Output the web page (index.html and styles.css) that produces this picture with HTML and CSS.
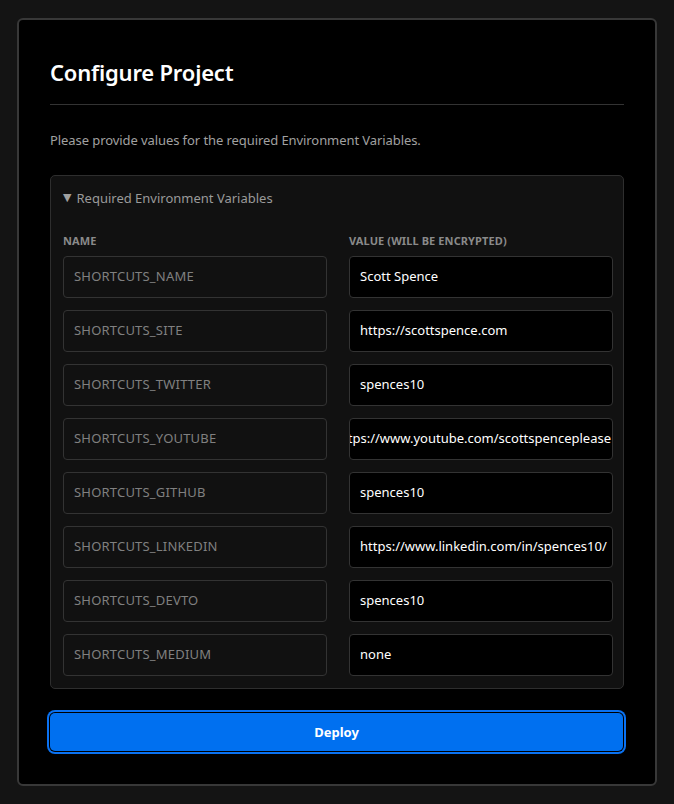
FILE: index.html
```html
<!DOCTYPE html>
<html lang="en">
<head>
<meta charset="utf-8">
<title>Configure Project</title>
<link rel="stylesheet" href="styles.css">
</head>
<body>
<main class="card">
  <h1 class="title">Configure Project</h1>
  <hr class="rule">
  <p class="intro">Please provide values for the required Environment Variables.</p>
  <section class="panel">
    <div class="summary"><span class="caret">▼</span>Required Environment Variables</div>
    <div class="grid">
      <div class="label">NAME</div>
      <div class="label">VALUE (WILL BE ENCRYPTED)</div>

      <div class="field name">SHORTCUTS_NAME</div>
      <div class="field value">Scott Spence</div>

      <div class="field name">SHORTCUTS_SITE</div>
      <div class="field value">https://scottspence.com</div>

      <div class="field name">SHORTCUTS_TWITTER</div>
      <div class="field value">spences10</div>

      <div class="field name">SHORTCUTS_YOUTUBE</div>
      <div class="field value scrolled"><span>https://www.youtube.com/scottspenceplease</span></div>

      <div class="field name">SHORTCUTS_GITHUB</div>
      <div class="field value">spences10</div>

      <div class="field name">SHORTCUTS_LINKEDIN</div>
      <div class="field value">https://www.linkedin.com/in/spences10/</div>

      <div class="field name">SHORTCUTS_DEVTO</div>
      <div class="field value">spences10</div>

      <div class="field name">SHORTCUTS_MEDIUM</div>
      <div class="field value">none</div>
    </div>
  </section>
  <button class="deploy" type="button">Deploy</button>
</main>
</body>
</html>
```
FILE: styles.css
```css
* { box-sizing: border-box; }
html, body {
  margin: 0;
  padding: 0;
  background: #141414;
}
body {
  padding: 18px 17px;
  font-family: "Noto Sans", "Open Sans", sans-serif;
  color: #fff;
}
.card {
  width: 640px;
  height: 768px;
  background: #000;
  border: 2px solid #383838;
  border-radius: 6px;
  padding: 37px 31px 0 31px;
}
.title {
  margin: 0;
  font-size: 22px;
  line-height: 30px;
  font-weight: 600;
  color: #fff;
  letter-spacing: -0.2px;
}
.rule {
  margin: 17px 0 0 0;
  border: 0;
  height: 1px;
  background: #333;
}
.intro {
  margin: 25px 0 0 0;
  font-size: 13px;
  line-height: 20px;
  color: #a1a1a1;
  letter-spacing: -0.08px;
}
.panel {
  margin-top: 25px;
  background: #111;
  border: 1px solid #2e2e2e;
  border-radius: 5px;
  padding: 12px 10px 12px 12px;
}
.summary {
  font-size: 13px;
  line-height: 20px;
  color: #9a9a9a;
  display: flex;
  align-items: center;
}
.caret {
  font-family: "DejaVu Sans", sans-serif;
  font-size: 11px;
  margin-right: 5px;
  color: #a0a0a0;
}
.grid {
  margin-top: 25px;
  display: grid;
  grid-template-columns: 264px 264px;
  column-gap: 22px;
  row-gap: 12px;
}
.label {
  font-size: 11px;
  line-height: 16px;
  font-weight: 700;
  color: #8a8a8a;
  letter-spacing: 0.1px;
  margin-bottom: -5px;
}
.field {
  height: 42px;
  border: 1px solid #333;
  border-radius: 4px;
  padding: 0 10px 2px 10px;
  display: flex;
  align-items: center;
  font-size: 13px;
  white-space: nowrap;
  overflow: hidden;
}
.name {
  background: #111;
  color: #808080;
  letter-spacing: 0.2px;
}
.value {
  background: #000;
  color: #fff;
}
.scrolled {
  justify-content: flex-end;
  padding-right: 1px;
}
.deploy {
  display: block;
  width: 573px;
  height: 38px;
  margin: 24px 0 0 0;
  padding-top: 1px;
  background: #0070f0;
  color: #fff;
  border: 0;
  border-radius: 5px;
  box-shadow: 0 0 0 1px #000, 0 0 0 3px #0a72f2;
  font-family: "Noto Sans", "Open Sans", sans-serif;
  font-size: 13px;
  font-weight: 700;
}
```
